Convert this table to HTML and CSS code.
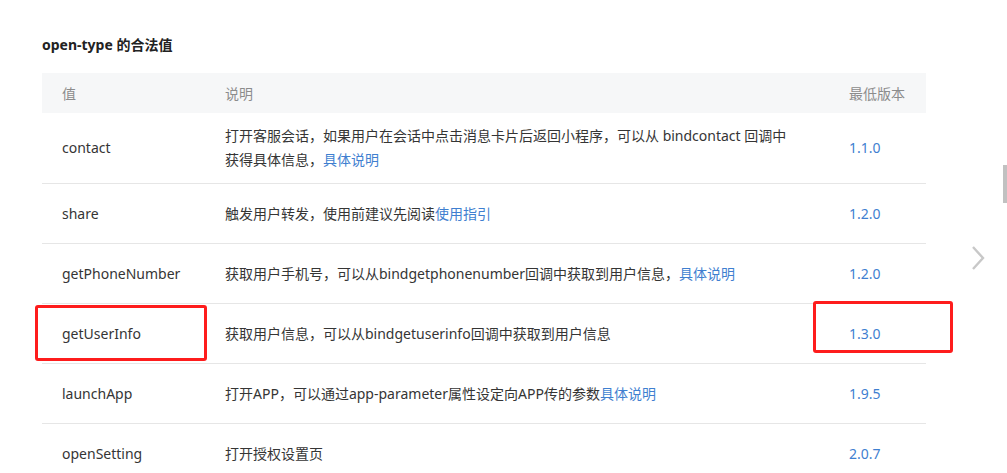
FILE: index.html
```html
<!DOCTYPE html>
<html lang="zh-CN">
<head>
    <meta charset="UTF-8">
    <title>open-type 的合法值</title>
    <link rel="stylesheet" href="styles.css">
</head>
<body>

    <div class="doc">
        <h3 class="doc-title">open-type 的合法值</h3>

        <table class="attr-table">
            <thead>
                <tr>
                    <th class="col-value">值</th>
                    <th class="col-desc">说明</th>
                    <th class="col-ver">最低版本</th>
                </tr>
            </thead>
            <tbody>
                <tr>
                    <td>contact</td>
                    <td class="desc">打开客服会话，如果用户在会话中点击消息卡片后返回小程序，可以从 bindcontact 回调中获得具体信息，<a href="#">具体说明</a></td>
                    <td><a href="#">1.1.0</a></td>
                </tr>
                <tr>
                    <td>share</td>
                    <td class="desc">触发用户转发，使用前建议先阅读<a href="#">使用指引</a></td>
                    <td><a href="#">1.2.0</a></td>
                </tr>
                <tr>
                    <td>getPhoneNumber</td>
                    <td class="desc">获取用户手机号，可以从bindgetphonenumber回调中获取到用户信息，<a href="#">具体说明</a></td>
                    <td><a href="#">1.2.0</a></td>
                </tr>
                <tr>
                    <td><span class="mark mark-name"></span>getUserInfo</td>
                    <td class="desc">获取用户信息，可以从bindgetuserinfo回调中获取到用户信息</td>
                    <td><span class="mark mark-ver"></span><a href="#">1.3.0</a></td>
                </tr>
                <tr>
                    <td>launchApp</td>
                    <td class="desc">打开APP，可以通过app-parameter属性设定向APP传的参数<a href="#">具体说明</a></td>
                    <td><a href="#">1.9.5</a></td>
                </tr>
                <tr>
                    <td>openSetting</td>
                    <td class="desc">打开授权设置页</td>
                    <td><a href="#">2.0.7</a></td>
                </tr>
            </tbody>
        </table>
    </div>

    <!-- next page arrow -->
    <a class="next-arrow" href="#">
        <svg width="16" height="26" viewBox="0 0 16 26">
            <path d="M3 2 L13 13 L3 24" fill="none" stroke="#c8c8c8" stroke-width="2.4"/>
        </svg>
    </a>

    <div class="scroll-thumb"></div>

</body>
</html>
```

FILE: styles.css
```css
* {
    margin: 0;
    padding: 0;
    box-sizing: border-box;
}

html, body {
    height: 100%;
    overflow: hidden;
}

body {
    font-family: "Noto Sans", "Noto Sans CJK SC", sans-serif;
    font-size: 14px;
    color: #353535;
    background: #fff;
    position: relative;
}

a {
    color: #3f7fd0;
    text-decoration: none;
}

/* Doc section */
.doc {
    padding: 35px 0 0 42px;
}

.doc-title {
    font-size: 14px;
    font-weight: 700;
    line-height: 20px;
    color: #222;
    margin-bottom: 18px;
}

/* Attribute table */
.attr-table {
    width: 884px;
    border-collapse: collapse;
    table-layout: fixed;
}

.attr-table th {
    height: 40px;
    background-color: #f6f7f8;
    color: #8c8c8c;
    font-weight: 400;
    text-align: left;
    padding: 0 20px;
}

.col-value { width: 163px; }
.col-ver { width: 97px; }

.attr-table td {
    height: 60px;
    padding: 11px 20px;
    line-height: 24px;
    vertical-align: middle;
    border-top: 1px solid #e6e6e6;
    position: relative;
}

.attr-table td.desc {
    padding-right: 32px;
}

.attr-table tbody tr:first-child td {
    border-top: none;
}

/* Red highlight boxes */
.mark {
    position: absolute;
    border: 3px solid #fe1c1c;
    border-radius: 3px;
}

.mark-name {
    left: -7px;
    top: 1px;
    width: 172px;
    height: 56px;
}

.mark-ver {
    left: -16px;
    top: -3px;
    width: 140px;
    height: 52px;
}

/* Side controls */
.next-arrow {
    position: absolute;
    left: 970px;
    top: 245px;
}

.scroll-thumb {
    position: absolute;
    right: 0;
    top: 165px;
    width: 4px;
    height: 38px;
    background-color: #c1c1c1;
}
```
